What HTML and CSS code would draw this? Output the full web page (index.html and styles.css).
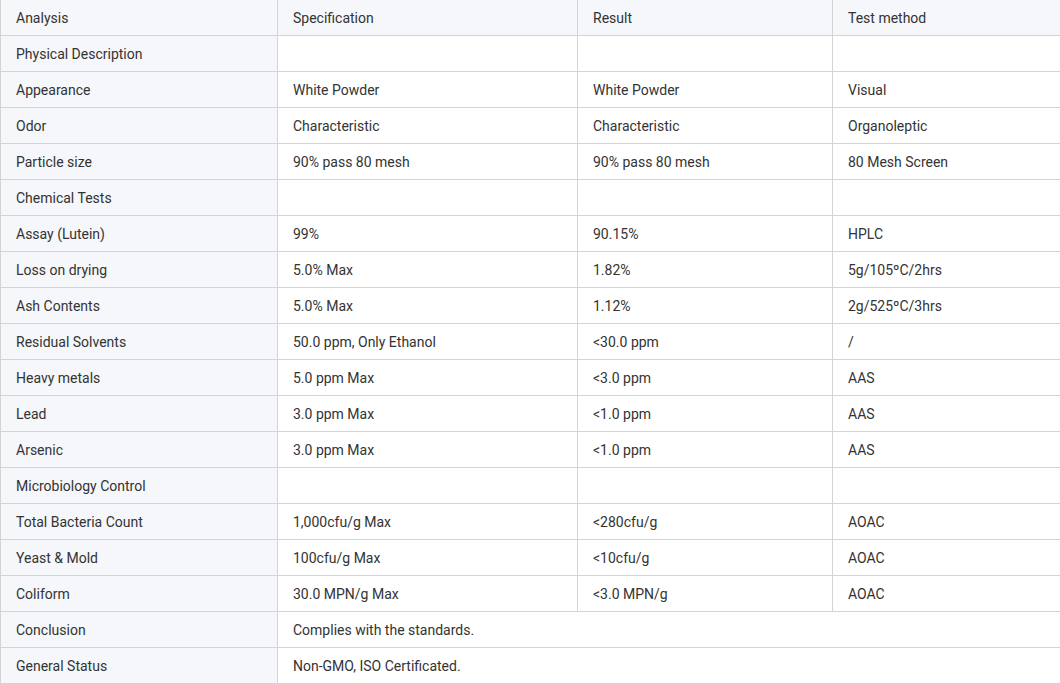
FILE: index.html
```html
<!DOCTYPE html>
<html>
<head>
<meta charset="utf-8">
<link rel="stylesheet" href="styles.css">
</head>
<body>
<table class="spec">
<colgroup><col class="c1"><col class="c2"><col class="c3"><col class="c4"></colgroup>
<tr class="head"><td>Analysis</td><td>Specification</td><td>Result</td><td>Test method</td></tr>
<tr><td>Physical Description</td><td></td><td></td><td></td></tr>
<tr><td>Appearance</td><td>White Powder</td><td>White Powder</td><td>Visual</td></tr>
<tr><td>Odor</td><td>Characteristic</td><td>Characteristic</td><td>Organoleptic</td></tr>
<tr><td>Particle size</td><td>90% pass 80 mesh</td><td>90% pass 80 mesh</td><td>80 Mesh Screen</td></tr>
<tr><td>Chemical Tests</td><td></td><td></td><td></td></tr>
<tr><td>Assay (Lutein)</td><td>99%</td><td>90.15%</td><td>HPLC</td></tr>
<tr><td>Loss on drying</td><td>5.0% Max</td><td>1.82%</td><td>5g/105ºC/2hrs</td></tr>
<tr><td>Ash Contents</td><td>5.0% Max</td><td>1.12%</td><td>2g/525ºC/3hrs</td></tr>
<tr><td>Residual Solvents</td><td>50.0 ppm, Only Ethanol</td><td>&lt;30.0 ppm</td><td>/</td></tr>
<tr><td>Heavy metals</td><td>5.0 ppm Max</td><td>&lt;3.0 ppm</td><td>AAS</td></tr>
<tr><td>Lead</td><td>3.0 ppm Max</td><td>&lt;1.0 ppm</td><td>AAS</td></tr>
<tr><td>Arsenic</td><td>3.0 ppm Max</td><td>&lt;1.0 ppm</td><td>AAS</td></tr>
<tr><td>Microbiology Control</td><td></td><td></td><td></td></tr>
<tr><td>Total Bacteria Count</td><td>1,000cfu/g Max</td><td>&lt;280cfu/g</td><td>AOAC</td></tr>
<tr><td>Yeast &amp; Mold</td><td>100cfu/g Max</td><td>&lt;10cfu/g</td><td>AOAC</td></tr>
<tr><td>Coliform</td><td>30.0 MPN/g Max</td><td>&lt;3.0 MPN/g</td><td>AOAC</td></tr>
<tr><td>Conclusion</td><td colspan="3">Complies with the standards.</td></tr>
<tr><td>General Status</td><td colspan="3">Non-GMO, ISO Certificated.</td></tr>
</table>
</body>
</html>
```
FILE: styles.css
```css
html, body {
  margin: 0;
  padding: 0;
  background: #ffffff;
}
.spec {
  margin-top: -1px;
  width: 1060px;
  table-layout: fixed;
  border-collapse: collapse;
  font-family: Roboto, "Liberation Sans", sans-serif;
  font-size: 14px;
  color: #333333;
}
.c1 { width: 277px; }
.c2 { width: 300px; }
.c3 { width: 255px; }
.c4 { width: 228px; }
.spec td {
  border: 1px solid #d4d4d4;
  height: 36px;
  padding: 0 15px;
  box-sizing: border-box;
  vertical-align: middle;
  line-height: 20px;
  white-space: nowrap;
}
.spec td:first-child,
.spec .head td {
  background: #f5f7fa;
}
```
